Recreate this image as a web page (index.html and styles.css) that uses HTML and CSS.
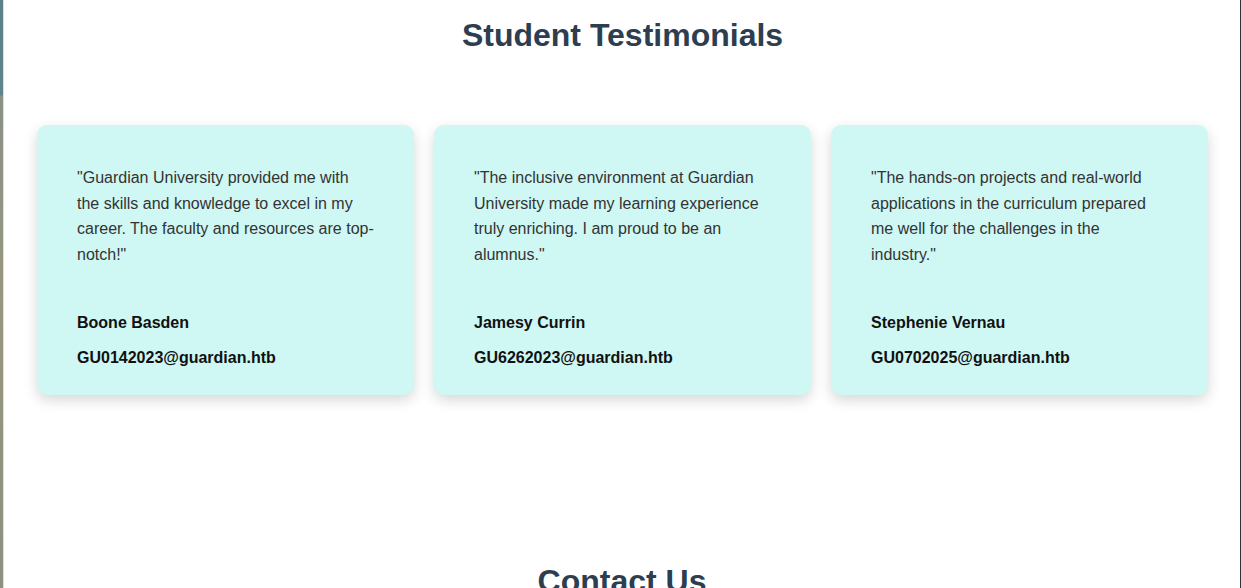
FILE: index.html
```html
<!DOCTYPE html>
<html lang="en">
<head>
<meta charset="utf-8">
<title>Guardian University</title>
<link rel="stylesheet" href="styles.css">
</head>
<body>
<div class="page">
  <section class="testimonials">
    <h2 class="section-title">Student Testimonials</h2>
    <div class="cards">
      <div class="card">
        <p class="quote">"Guardian University provided me with the skills and knowledge to excel in my career. The faculty and resources are top-notch!"</p>
        <p class="name">Boone Basden</p>
        <p class="email">GU0142023@guardian.htb</p>
      </div>
      <div class="card">
        <p class="quote">"The inclusive environment at Guardian University made my learning experience truly enriching. I am proud to be an alumnus."</p>
        <p class="name">Jamesy Currin</p>
        <p class="email">GU6262023@guardian.htb</p>
      </div>
      <div class="card">
        <p class="quote">"The hands-on projects and real-world applications in the curriculum prepared me well for the challenges in the industry."</p>
        <p class="name">Stephenie Vernau</p>
        <p class="email">GU0702025@guardian.htb</p>
      </div>
    </div>
  </section>
  <section class="contact">
    <h2 class="section-title">Contact Us</h2>
  </section>
</div>
</body>
</html>
```

FILE: styles.css
```css
html, body {
  margin: 0;
  padding: 0;
  height: 100%;
  overflow: hidden;
}

body {
  font-family: "Liberation Sans", Arial, sans-serif;
  background: linear-gradient(to bottom, #5b8088 0, #5f868c 95px, #8a9286 96px, #98967f 300px, #8d917f 588px);
}

.page {
  margin-left: 3px;
  border-left: 1px solid #d6e2e4;
  border-right: 1px solid #333;
  background: #fff;
  min-height: 100%;
  box-sizing: border-box;
}

.section-title {
  margin: 0;
  font-size: 32px;
  font-weight: bold;
  color: #2c3e50;
  text-align: center;
  line-height: normal;
}

.testimonials {
  padding: 17px 32px 0 33px;
}

.cards {
  display: grid;
  grid-template-columns: repeat(3, 1fr);
  gap: 20px;
  margin-top: 71px;
}

.card {
  background: #cff7f3;
  border-radius: 10px;
  box-shadow: 0 5px 14px rgba(0, 0, 0, 0.16);
  padding: 40px 40px 24px;
}

.card p {
  margin: 0;
  font-size: 16px;
  line-height: 1.6;
}

.quote {
  color: #333;
}

.name,
.email {
  font-weight: bold;
  color: #111;
}

.card .quote {
  margin-bottom: 43px;
}

.card .name {
  margin-bottom: 9px;
}

.contact {
  padding-top: 168px;
}
```
